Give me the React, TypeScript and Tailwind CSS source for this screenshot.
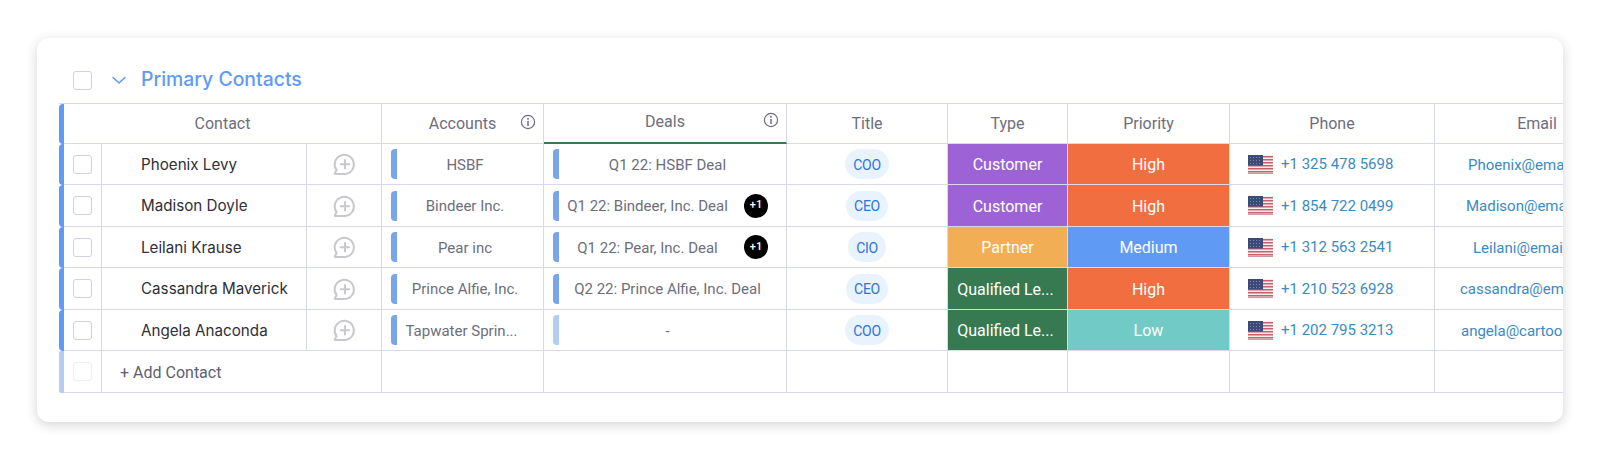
const rows = [
  { name: 'Phoenix Levy', account: 'HSBF', accountPad: 'pr-[10px]', deal: 'Q1 22: HSBF Deal', more: false, title: 'COO', type: 'Customer', typeBg: 'bg-[#9d63d6]', priority: 'High', priorityBg: 'bg-[#f06e3f]', phone: '+1 325 478 5698', email: 'Phoenix@email.com', h: 'h-[41px]', emailPad: 'pl-[33px]' },
  { name: 'Madison Doyle', account: 'Bindeer Inc.', accountPad: 'pr-[10px]', deal: 'Q1 22: Bindeer, Inc. Deal', more: true, title: 'CEO', type: 'Customer', typeBg: 'bg-[#9d63d6]', priority: 'High', priorityBg: 'bg-[#f06e3f]', phone: '+1 854 722 0499', email: 'Madison@email.com', h: 'h-[42px]', emailPad: 'pl-[31px]' },
  { name: 'Leilani Krause', account: 'Pear inc', accountPad: 'pr-[10px]', deal: 'Q1 22: Pear, Inc. Deal', more: true, title: 'CIO', type: 'Partner', typeBg: 'bg-[#f2ae55]', priority: 'Medium', priorityBg: 'bg-[#5f9af5]', phone: '+1 312 563 2541', email: 'Leilani@email.com', h: 'h-[41px]', emailPad: 'pl-[38px]' },
  { name: 'Cassandra Maverick', account: 'Prince Alfie, Inc.', accountPad: 'pr-[10px]', deal: 'Q2 22: Prince Alfie, Inc. Deal', more: false, title: 'CEO', type: 'Qualified Le...', typeBg: 'bg-[#377a51] pr-[4px]', priority: 'High', priorityBg: 'bg-[#f06e3f]', phone: '+1 210 523 6928', email: 'cassandra@email.com', h: 'h-[42px]', emailPad: 'pl-[25px]' },
  { name: 'Angela Anaconda', account: 'Tapwater Sprin...', accountPad: 'pr-[17px]', deal: '-', more: false, title: 'COO', type: 'Qualified Le...', typeBg: 'bg-[#377a51] pr-[4px]', priority: 'Low', priorityBg: 'bg-[#72cac6]', phone: '+1 202 795 3213', email: 'angela@cartoon.com', h: 'h-[41px]', emailPad: 'pl-[26px]' },
];

function CommentPlus() {
  return (
    <svg width="24" height="24" viewBox="0 0 24 24" fill="none" stroke="#c8c8ce" strokeWidth="2" strokeLinecap="round" strokeLinejoin="round">
      <path d="M4.6 18.2A9.6 9.6 0 1 1 13 22H3.4c-.7 0-.9-.5-.5-1z" />
      <path d="M13 8v8.5M8.8 12.2h8.4" />
    </svg>
  );
}

function InfoIcon() {
  return (
    <svg width="16" height="16" viewBox="0 0 16 16" fill="none" stroke="#6d6e7c" strokeWidth="1.2" strokeLinecap="round">
      <circle cx="8" cy="8" r="6.6" />
      <path d="M8 7.4v4" strokeWidth="1.5" />
      <path d="M8 4.7v.3" strokeWidth="1.7" />
    </svg>
  );
}

function Flag() {
  const stripes = [1, 4, 7, 10, 13, 16];
  return (
    <svg width="25" height="19" viewBox="0 0 25 19" className="shrink-0">
      <rect width="25" height="19" fill="#f4eeee" />
      {stripes.map((y) => (
        <rect key={y} y={y} width="25" height="1.5" fill="#c4616a" />
      ))}
      <rect y="18" width="25" height="1" fill="#cf9a9e" />
      <rect width="15" height="10.5" fill="#3c4a78" />
      {[2, 5, 8].map((y) =>
        [2, 5, 8, 11].map((x) => <rect key={`${x}-${y}`} x={x} y={y} width="1" height="1" fill="#7c86a8" />)
      )}
    </svg>
  );
}

function Check({ faded }: { faded?: boolean }) {
  return <div className={`w-[19px] h-[19px] rounded-[3px] border-[1.5px] bg-white ${faded ? 'border-[#eeeef3]' : 'border-[#d0d1e0]'}`} />;
}

function LinkBar({ faded }: { faded?: boolean }) {
  return <div className={`w-[6px] h-[30px] rounded-l-[4px] shrink-0 ${faded ? 'bg-[#b3cdf5]' : 'bg-[#79a5ed]'}`} />;
}

const line = 'border-r border-b border-[#d8d9ec]';

export default function App() {
  return (
    <div className="w-[1600px] h-[460px] bg-white pt-[38px] pl-[37px] font-['Roboto',sans-serif] overflow-hidden">
      <div className="w-[1526px] h-[384px] rounded-[12px] bg-white shadow-[0_3px_12px_rgba(40,40,60,0.2)] overflow-hidden pt-[23px] pl-[22px]">
        <div className="flex items-center h-[38px] mb-[4px] pl-[14px]">
          <Check />
          <svg width="16" height="16" viewBox="0 0 16 16" fill="none" stroke="#5f9af5" strokeWidth="1.6" strokeLinecap="round" strokeLinejoin="round" className="ml-[19px]">
            <path d="M2 5.5 8 11l6-5.5" />
          </svg>
          <div className="ml-[14px] text-[19.4px] font-medium text-[#5f9af5] font-['Inter',sans-serif] leading-none">Primary Contacts</div>
        </div>

        <div className="w-[1600px]">
          {/* header */}
          <div className="flex h-[41px] border-t border-[#d8d9ec] text-[16px] text-[#6d6e7c]">
            <div className="w-[5px] rounded-l-[4px] bg-[#5f9af5] shrink-0" />
            <div className={`w-[318px] flex items-center justify-center ${line}`}>Contact</div>
            <div className={`w-[162px] relative flex items-center justify-center ${line}`}>
              Accounts
              <div className="absolute right-[7px] top-[10px]"><InfoIcon /></div>
            </div>
            <div className="w-[243px] relative flex items-center justify-center pb-[3px] border-r border-b-2 border-r-[#d8d9ec] border-b-[#377a51]">
              Deals
              <div className="absolute right-[7px] top-[8px]"><InfoIcon /></div>
            </div>
            <div className={`w-[161px] flex items-center justify-center ${line}`}>Title</div>
            <div className={`w-[120px] flex items-center justify-center ${line}`}>Type</div>
            <div className={`w-[162px] flex items-center justify-center ${line}`}>Priority</div>
            <div className={`w-[205px] flex items-center justify-center ${line}`}>Phone</div>
            <div className={`w-[205px] flex items-center justify-center ${line}`}>Email</div>
          </div>

          {/* contact rows */}
          {rows.map((r) => (
            <div key={r.name} className={`flex ${r.h} text-[15px]`}>
              <div className="w-[5px] rounded-l-[4px] bg-[#5f9af5] shrink-0" />
              <div className={`w-[38px] flex items-center justify-center ${line}`}><Check /></div>
              <div className={`w-[205px] flex items-center pl-[39px] pt-[2px] text-[15.2px] text-[#2f3038] font-['Inter',sans-serif] ${line}`}>{r.name}</div>
              <div className={`w-[75px] flex items-center justify-center ${line}`}><CommentPlus /></div>
              <div className={`w-[162px] flex items-center pl-[9px] text-[#6d6e7c] ${line}`}>
                <LinkBar />
                <div className={`flex-1 text-center whitespace-nowrap pt-[2px] ${r.accountPad}`}>{r.account}</div>
              </div>
              <div className={`w-[243px] flex items-center pl-[9px] text-[#6d6e7c] ${line}`}>
                <LinkBar faded={r.deal === '-'} />
                <div className={`flex-1 text-center whitespace-nowrap pt-[2px] ${r.more ? 'pr-[8px]' : 'pr-[10px]'}`}>{r.deal}</div>
                {r.more && (
                  <div className="w-[24px] h-[24px] mr-[18px] rounded-full bg-black text-white text-[11px] font-medium flex items-center justify-center shrink-0">+1</div>
                )}
              </div>
              <div className={`w-[161px] flex items-center justify-center ${line}`}>
                <div className="h-[30px] px-[8px] pt-[2px] rounded-full bg-[#e8f3fd] text-[14px] tracking-[-0.3px] text-[#2f74dc] flex items-center">{r.title}</div>
              </div>
              <div className={`w-[120px] flex items-center justify-center pt-[2px] text-[16px] text-white ${r.typeBg} ${line}`}>{r.type}</div>
              <div className={`w-[162px] flex items-center justify-center pt-[2px] text-[16px] text-white ${r.priorityBg} ${line}`}>{r.priority}</div>
              <div className={`w-[205px] flex items-center pl-[18px] gap-[8px] text-[#3a8ac4] ${line}`}>
                <Flag />
                <span className="pt-[1px]">{r.phone}</span>
              </div>
              <div className={`w-[205px] flex items-center pt-[2px] whitespace-nowrap text-[#3a8ac4] ${r.emailPad} ${line}`}>{r.email}</div>
            </div>
          ))}

          {/* add row */}
          <div className="flex h-[42px]">
            <div className="w-[5px] rounded-l-[2px] bg-[#b3cdf5] shrink-0" />
            <div className={`w-[38px] flex items-center justify-center ${line}`}><Check faded /></div>
            <div className={`w-[280px] flex items-center pl-[18px] pt-[2px] text-[16px] text-[#5f6070] ${line}`}>+ Add Contact</div>
            <div className={`w-[162px] ${line}`} />
            <div className={`w-[243px] ${line}`} />
            <div className={`w-[161px] ${line}`} />
            <div className={`w-[120px] ${line}`} />
            <div className={`w-[162px] ${line}`} />
            <div className={`w-[205px] ${line}`} />
            <div className={`w-[205px] ${line}`} />
          </div>
        </div>
      </div>
    </div>
  );
}
